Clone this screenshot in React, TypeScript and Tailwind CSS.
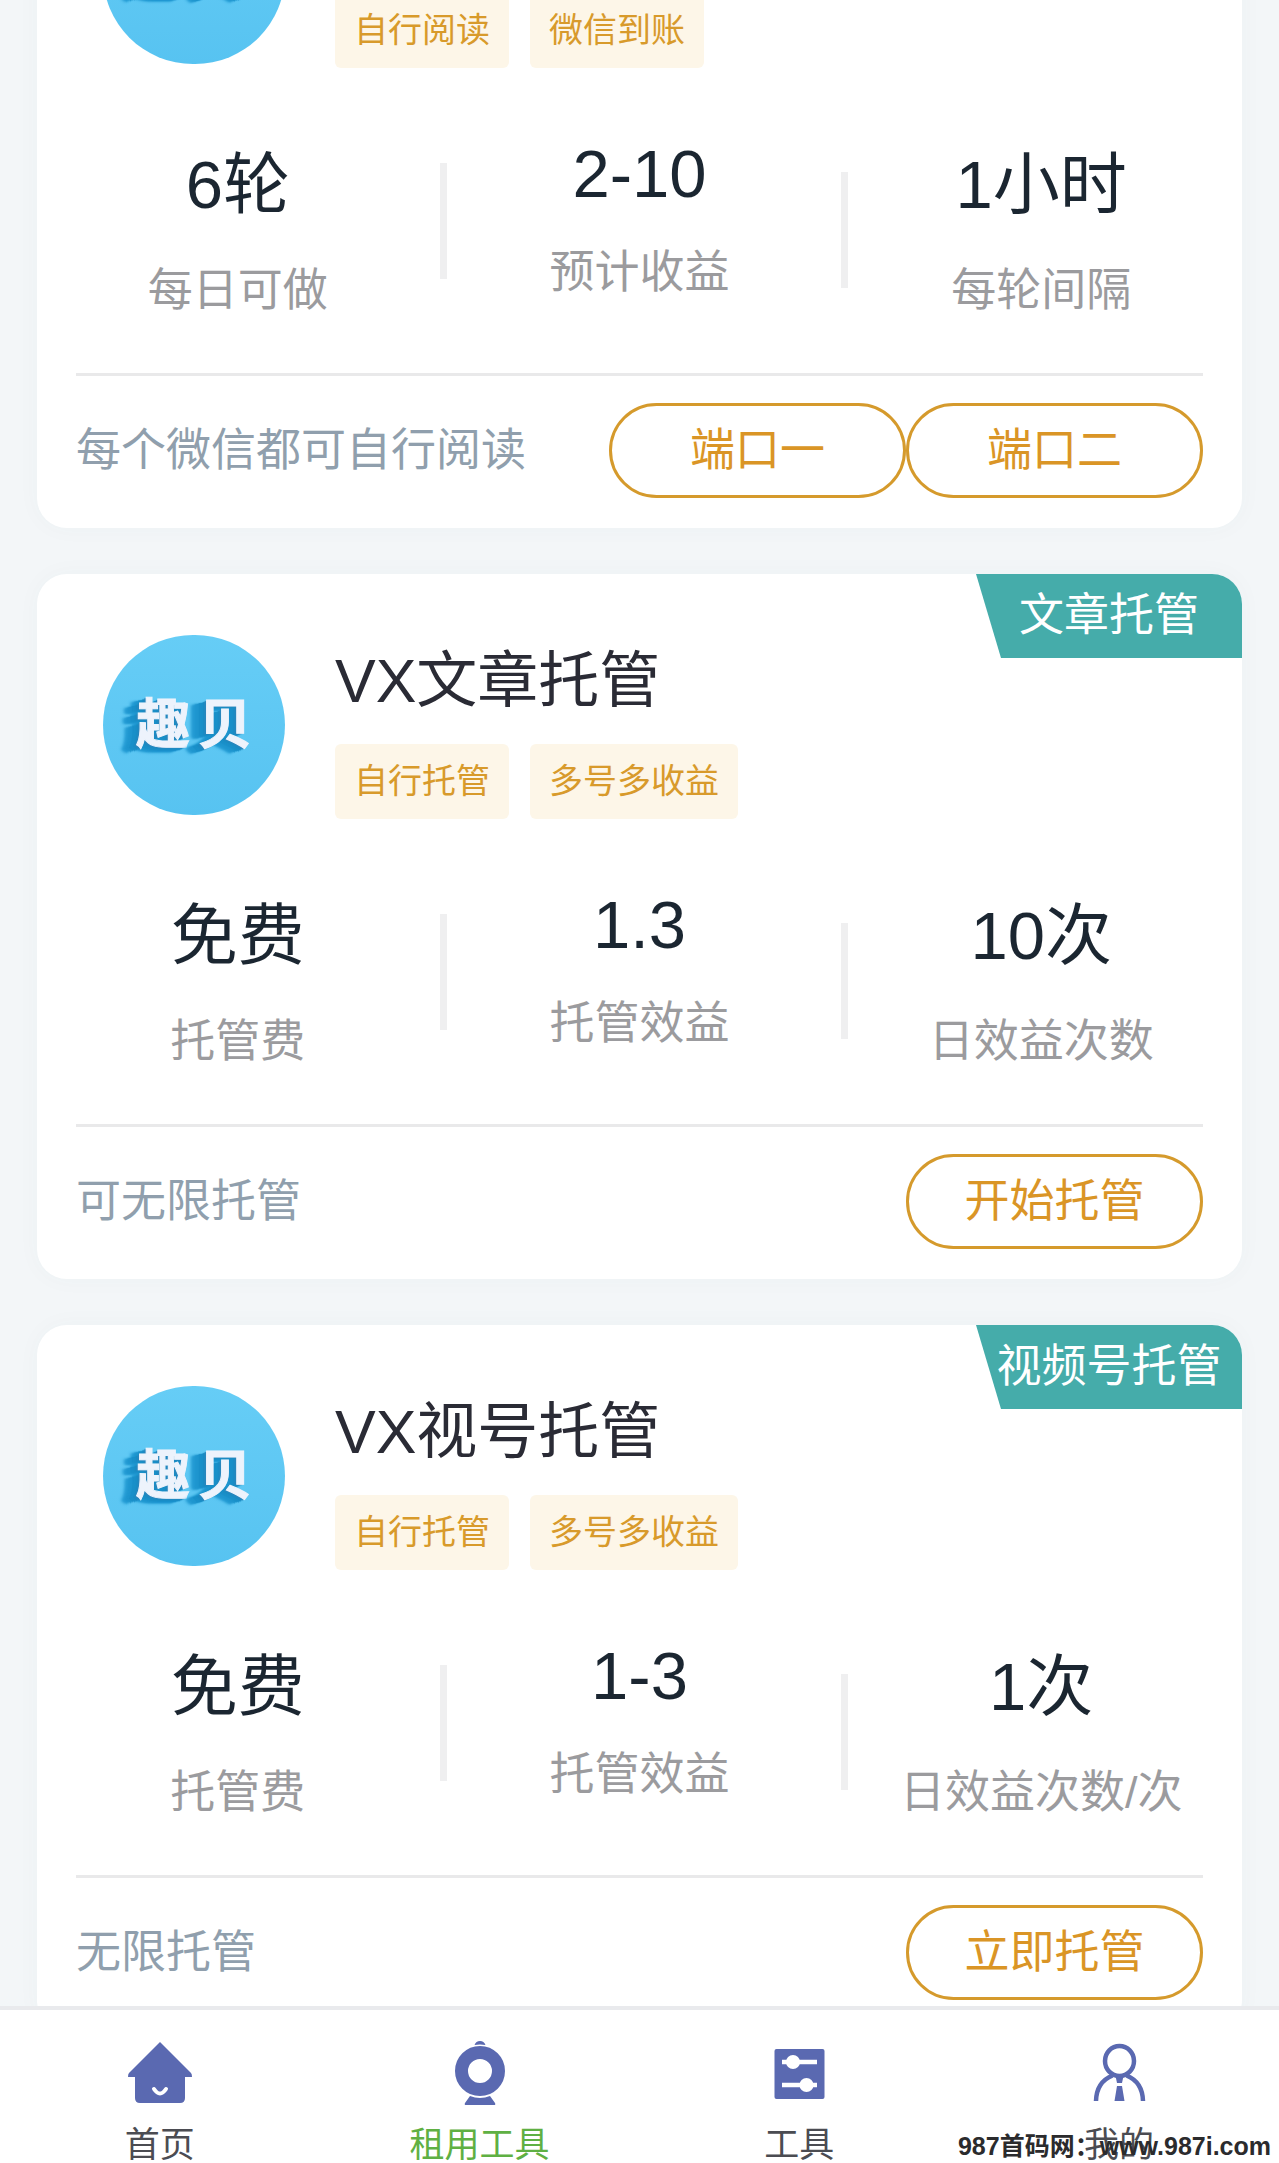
import React from 'react';

type Stat = { value: string; label: string };

type Task = {
  id: string;
  title?: string;
  badge?: string;
  tags: string[];
  stats: Stat[];
  note: string;
  actions: string[];
};

const TASKS: Task[] = [
  {
    id: 'read',
    tags: ['自行阅读', '微信到账'],
    stats: [
      { value: '6轮', label: '每日可做' },
      { value: '2-10', label: '预计收益' },
      { value: '1小时', label: '每轮间隔' },
    ],
    note: '每个微信都可自行阅读',
    actions: ['端口一', '端口二'],
  },
  {
    id: 'article',
    title: 'VX文章托管',
    badge: '文章托管',
    tags: ['自行托管', '多号多收益'],
    stats: [
      { value: '免费', label: '托管费' },
      { value: '1.3', label: '托管效益' },
      { value: '10次', label: '日效益次数' },
    ],
    note: '可无限托管',
    actions: ['开始托管'],
  },
  {
    id: 'video',
    title: 'VX视号托管',
    badge: '视频号托管',
    tags: ['自行托管', '多号多收益'],
    stats: [
      { value: '免费', label: '托管费' },
      { value: '1-3', label: '托管效益' },
      { value: '1次', label: '日效益次数/次' },
    ],
    note: '无限托管',
    actions: ['立即托管'],
  },
];

// plain number values sit on a shorter line than the ones with chinese units
const isNumeric = (value: string) => /^[\d.-]+$/.test(value);

const Avatar = () => (
  <div className="flex h-[180px] w-[182px] shrink-0 items-center justify-center gap-2 rounded-full bg-linear-to-b from-[#66cdf6] to-[#57c3f1] text-[54px] font-bold leading-[60px] text-[#edf3fc] [-webkit-text-stroke:1px_#edf3fc] [text-shadow:-2px_1px_1px_#2a86bd,-4px_2px_1px_#1a8cc4,-6px_3px_1px_#1a90c9,-8px_3px_1px_#1a90c9,-10px_4px_1px_#1f96cf,-12px_4px_2px_#1f96cf,-14px_5px_2px_#259cd4,-16px_5px_3px_#2ea3d9]">
    <span>趣</span>
    <span>贝</span>
  </div>
);

const StatItem = ({ stat, divided }: { stat: Stat; divided: boolean }) => (
  <div className="flex items-center">
    {divided && <span className="-mr-2 ml-px h-[116px] w-[7px] bg-[#efeff0]" />}
    <div className="flex-1 text-center">
      <p
        className={`text-[67px] text-[#1b2631] ${
          isNumeric(stat.value) ? 'pb-1 leading-[73px]' : 'leading-[95px]'
        }`}
      >
        {stat.value}
      </p>
      <p className="mt-7 whitespace-nowrap text-[45px] leading-[62px] text-[#9b9b9e]">
        {stat.label}
      </p>
    </div>
  </div>
);

const TaskCard = ({ task }: { task: Task }) => (
  <article className="relative rounded-[30px] bg-white pb-[30px] pt-[61px] shadow-[0_0_24px_rgba(60,80,100,0.03)]">
    {task.badge && (
      <div className="absolute right-0 top-0 flex h-[84px] w-[266px] items-center justify-center rounded-tr-[30px] bg-[#45acaa] text-[45px] text-white [clip-path:polygon(0_0,100%_0,100%_100%,25px_100%)]">
        {task.badge}
      </div>
    )}

    <header className="flex gap-[50px] px-[66px]">
      <Avatar />
      <div>
        <h2 className="h-[92px] text-[61px] leading-[92px] text-[#2a2b35]">
          {task.title}
        </h2>
        <ul className="mt-[17px] flex gap-[21px]">
          {task.tags.map((tag) => (
            <li
              key={tag}
              className="rounded-md bg-[#fdf6e8] px-[19px] text-[34px] leading-[75px] text-[#d89a2b]"
            >
              {tag}
            </li>
          ))}
        </ul>
      </div>
    </header>

    <div className="mt-[69px] grid grid-cols-3 items-start">
      {task.stats.map((stat, i) => (
        <StatItem key={stat.label} stat={stat} divided={i > 0} />
      ))}
    </div>

    <footer className="mx-[39px] mt-[51px] flex items-center justify-between border-t-3 border-[#e9e9ea] pt-[27px]">
      <p className="text-[45px] leading-[62px] text-[#909fad]">{task.note}</p>
      <div className="flex">
        {task.actions.map((action) => (
          <button
            key={action}
            type="button"
            className="h-[95px] w-[297px] rounded-full border-3 border-[#d59a2c] text-[45px] text-[#da9526]"
          >
            {action}
          </button>
        ))}
      </div>
    </footer>
  </article>
);

const HomeIcon = () => (
  <svg viewBox="0 0 64 64" className="size-16">
    <path
      d="M32 1 63 32q1 1 1 4H57V57q0 5-5 5H12q-5 0-5-5V36H0q0-3 1-4Z"
      fill="#5a69b1"
    />
    <path
      d="M26 48q6 9 12 0"
      fill="none"
      stroke="#fff"
      strokeWidth="4"
      strokeLinecap="round"
    />
  </svg>
);

const CameraIcon = () => (
  <svg viewBox="0 0 64 64" className="size-16">
    <path d="M26.500 4Q28 0 32 0t5.500 4Q32 3 26.500 4Z" fill="#5a69b1" />
    <circle cx="32" cy="30" r="18.500" fill="none" stroke="#5a69b1" strokeWidth="13" />
    <path d="M22 55q10 4 20 0l5 7q1 2-1 2H18q-2 0-1-2Z" fill="#5a69b1" />
  </svg>
);

const SlidersIcon = () => (
  <svg viewBox="0 0 64 64" className="size-16">
    <rect x="7.500" y="8" width="50" height="50" rx="2" fill="#5a69b1" />
    <path d="M15 21h35M15 44h35" stroke="#fff" strokeWidth="4.500" />
    <circle cx="26" cy="21" r="7" fill="#fff" />
    <circle cx="39.500" cy="44" r="7" fill="#fff" />
  </svg>
);

const UserIcon = () => (
  <svg viewBox="0 0 64 64" className="size-16">
    <g fill="none" stroke="#5a69b1" strokeWidth="4.500">
      <ellipse cx="32.500" cy="20" rx="14.500" ry="15" />
      <path d="M9 60Q9.500 41 25.500 34.500M56 60Q55.500 41 39.500 34.500" />
    </g>
    <path d="M28.500 35h8l-1.500 7h-5ZM30 45h5l2.500 15h-10Z" fill="#5a69b1" />
  </svg>
);

const NAV = [
  { label: '首页', href: '#home', Icon: HomeIcon },
  { label: '租用工具', href: '#rent', Icon: CameraIcon, active: true },
  { label: '工具', href: '#tools', Icon: SlidersIcon },
  { label: '我的', href: '#mine', Icon: UserIcon },
];

const App = () => {
  return (
    <div className="relative flex h-screen flex-col overflow-hidden bg-[#f3f6f8] font-['Liberation_Sans','Noto_Sans_CJK_SC',sans-serif]">
      <main className="min-h-0 flex-1 overflow-hidden">
        {/* list is scrolled part way into the first card */}
        <div className="-mt-[177px] flex flex-col gap-[46px] px-[37px]">
          {TASKS.map((task) => (
            <TaskCard key={task.id} task={task} />
          ))}
        </div>
      </main>

      <nav className="grid shrink-0 grid-cols-4 border-t-4 border-[#e9eaed] bg-white pt-[31px]">
        {NAV.map(({ label, href, Icon, active }) => (
          <a
            key={label}
            href={href}
            className={`flex flex-col items-center gap-[22px] text-[35px] leading-[36px] ${
              active ? 'text-[#5fb043]' : 'text-[#4b4c52]'
            }`}
          >
            <Icon />
            {label}
          </a>
        ))}
      </nav>

      <p className="absolute bottom-px right-2 whitespace-nowrap text-[25px] font-bold leading-8 text-[#2b2b2d]">
        987首码网：www.987i.com
      </p>
    </div>
  );
};

export default App;
